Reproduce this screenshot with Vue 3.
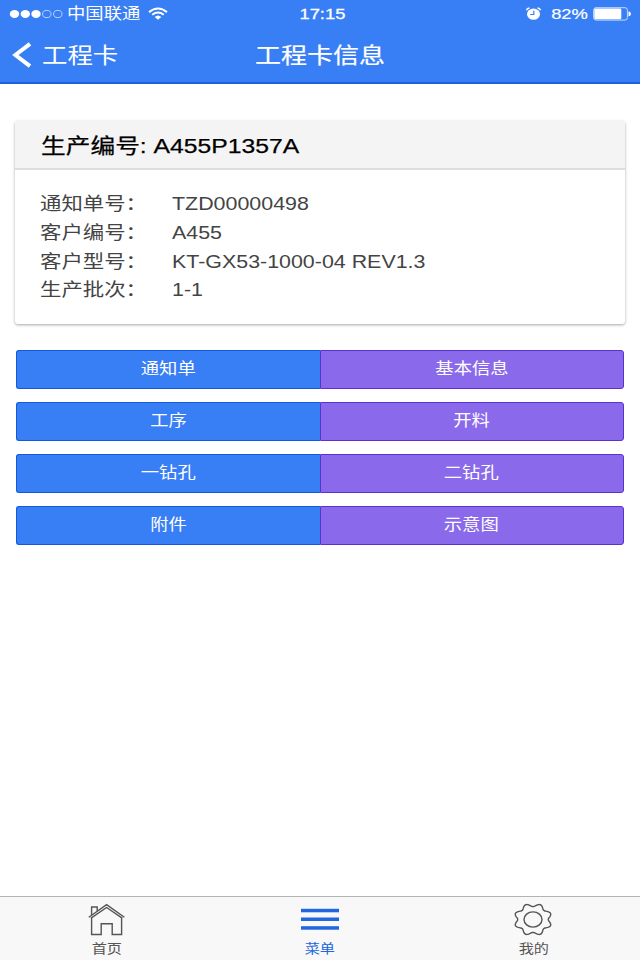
<template>
  <div class="app">
    <header class="top">
      <div class="status">
        <div class="status__side">
          <svg class="signal" width="54" height="12" viewBox="0 0 54 12">
            <ellipse v-for="x in [5.5, 16.3, 27]" :key="x" :cx="x" cy="6" rx="4.7" ry="4" fill="#fff" />
            <ellipse
              v-for="x in [37.8, 48.8]"
              :key="x"
              :cx="x"
              cy="6"
              rx="4.2"
              ry="3.6"
              fill="none"
              stroke="#bcd5fd"
            />
          </svg>
          <span class="wide wide--left carrier">中国联通</span>
          <svg class="wifi" width="20" height="14" viewBox="0 0 20 14" fill="none" stroke="#fff">
            <path d="M1 5.1Q10-2.1 19 5.1" stroke-width="2" />
            <path d="M4.2 7.8Q10 3.3 15.8 7.8" stroke-width="1.9" />
            <path d="M6.7 10.1Q10 7.1 13.3 10.1L10 12.7z" fill="#fff" stroke="none" />
          </svg>
        </div>
        <span class="wide time">17:15</span>
        <div class="status__side status__side--right">
          <svg class="alarm" width="17" height="14" viewBox="0 0 17 14">
            <ellipse cx="8.5" cy="7.2" rx="6.5" ry="5.6" fill="#fff" />
            <path
              d="M1.4 3.3Q2.2 1.3 4.5 1M15.6 3.3Q14.8 1.3 12.5 1"
              fill="none"
              stroke="#fff"
              stroke-width="1.5"
            />
            <path d="M8.8 3.8V7.5H5.2" fill="none" stroke="#387ef5" stroke-width="1.2" />
          </svg>
          <span class="wide percent">82%</span>
          <svg class="battery" width="38" height="14" viewBox="0 0 38 14">
            <rect x=".6" y=".7" width="33.8" height="12.4" rx="2.4" fill="none" stroke="#c4dafd" />
            <rect x="1.3" y="1.5" width="27" height="10.8" rx="1.3" fill="#fff" />
            <path d="M35.5 4.3Q38 5 38 6.9T35.5 9.5z" fill="#fff" />
          </svg>
        </div>
      </div>
      <nav class="nav">
        <button class="back" type="button">
          <svg width="20" height="26" viewBox="0 0 20 26">
            <path d="M18 1.8L3.4 13L18 24.2" fill="none" stroke="#fff" stroke-width="4" />
          </svg>
          <span class="wide wide--left back__text">工程卡</span>
        </button>
        <h1 class="nav__title"><span class="wide">工程卡信息</span></h1>
      </nav>
    </header>

    <main class="content">
      <section class="card">
        <h2 class="card__header">
          <span class="wide wide--left">生产编号: A455P1357A</span>
        </h2>
        <dl class="card__body">
          <div v-for="row in rows" :key="row.label" class="row">
            <dt><span class="wide wide--left">{{ row.label }}：</span></dt>
            <dd><span class="wide wide--left">{{ row.value }}</span></dd>
          </div>
        </dl>
      </section>

      <div class="buttons">
        <div v-for="pair in buttons" :key="pair[0]" class="button-bar">
          <button class="btn btn--positive" type="button"><span class="wide">{{ pair[0] }}</span></button>
          <button class="btn btn--royal" type="button"><span class="wide">{{ pair[1] }}</span></button>
        </div>
      </div>
    </main>

    <footer class="tabs">
      <a class="tab">
        <svg width="38" height="34" viewBox="0 0 38 34" fill="none" stroke="#555" stroke-width="1.4">
          <path d="M.8 14.2L18.6 1.7L36.4 14.2M3 15.2L18.6 4.5L34.2 15.2" />
          <path d="M3.6 14.5V31.5H13.2V20.8H24.2V31.5H33.6V14.5" />
          <path d="M3.6 12V4H9.2V8" />
        </svg>
        <span class="wide">首页</span>
      </a>
      <a class="tab tab--active">
        <svg width="38" height="34" viewBox="0 0 38 34" fill="#2166e0">
          <rect y="5.8" width="38" height="3.5" />
          <rect y="14.5" width="38" height="3.5" />
          <rect y="23.2" width="38" height="3.5" />
        </svg>
        <span class="wide">菜单</span>
      </a>
      <a class="tab">
        <svg width="38" height="34" viewBox="0 0 38 34" fill="none" stroke="#555" stroke-width="1.4">
          <path :d="gearPath" stroke-linejoin="round" />
          <ellipse cx="19" cy="16.5" rx="9" ry="7.6" />
        </svg>
        <span class="wide">我的</span>
      </a>
    </footer>
  </div>
</template>

<script setup>
const rows = [
  { label: '通知单号', value: 'TZD00000498' },
  { label: '客户编号', value: 'A455' },
  { label: '客户型号', value: 'KT-GX53-1000-04 REV1.3' },
  { label: '生产批次', value: '1-1' }
]

const buttons = [
  ['通知单', '基本信息'],
  ['工序', '开料'],
  ['一钻孔', '二钻孔'],
  ['附件', '示意图']
]

// eight rounded teeth, sampled around an ellipse, with a valley at the top
const points = []
for (let i = 0; i < 144; i++) {
  const angle = (i / 144) * Math.PI * 2
  const r = 0.92 - 0.1 * Math.cos(angle * 8)
  points.push(`${(19 + Math.cos(angle) * r * 18.6).toFixed(2)} ${(16.5 + Math.sin(angle) * r * 15.7).toFixed(2)}`)
}
const gearPath = `M${points.join('L')}Z`
</script>

<style>
body {
  margin: 0;
  background: #fff;
}
</style>

<style scoped>
.app {
  display: flex;
  flex-direction: column;
  height: 960px;
  font-family: "Liberation Sans", "Noto Sans CJK SC", sans-serif;
  color: #444;
  overflow: hidden;
}

button {
  border: 0;
  padding: 0;
  background: none;
  color: inherit;
  font: inherit;
}

svg {
  display: block;
  flex: none;
}

/* extended letterforms */
.wide {
  display: inline-block;
  white-space: nowrap;
  transform: scaleX(1.183);
}

.wide--left {
  transform-origin: left center;
}

.top {
  box-sizing: border-box;
  height: 84px;
  flex: none;
  background: #387ef5;
  border-bottom: 2px solid #1b62dc;
  color: #fff;
}

.status {
  display: grid;
  grid-template-columns: 1fr auto 1fr;
  align-items: center;
  height: 28px;
  padding: 0 9px;
  font-size: 15.5px;
  line-height: 28px;
}

.status__side {
  display: flex;
  align-items: center;
}

.status__side--right {
  justify-content: flex-end;
}

.carrier {
  width: 82px;
  margin-left: 4px;
}

.time {
  margin-left: 5px;
  -webkit-text-stroke: 0.3px #fff;
}

.wifi {
  margin-top: -1px;
  margin-left: -1px;
}

.alarm {
  margin-top: -1px;
}

.percent {
  margin: 0 8px 0 12px;
  -webkit-text-stroke: 0.2px #fff;
}

.nav {
  display: grid;
  grid-template-columns: 1fr auto 1fr;
  align-items: center;
  height: 54px;
  padding: 0 12px;
}

.back {
  display: flex;
  align-items: center;
  gap: 10px;
  font-size: 21.5px;
}

.back__text {
  padding-bottom: 4px;
}

.nav__title {
  margin: 0;
  padding-bottom: 4px;
  font-size: 22px;
  font-weight: 400;
  -webkit-text-stroke: 0.2px #fff;
}

.content {
  flex: 1;
  padding: 37px 15px 0;
}

.card {
  height: 203px;
  border-radius: 3px;
  background: #fff;
  box-shadow: 0 1px 3px rgba(0, 0, 0, 0.35);
  overflow: hidden;
}

.card__header {
  box-sizing: border-box;
  height: 49px;
  margin: 0;
  padding-left: 25.5px;
  border-bottom: 2px solid #ddd;
  background: #f4f4f4;
  color: #000;
  font-size: 20.9px;
  font-weight: 400;
  line-height: 49px;
  -webkit-text-stroke: 0.25px #000;
}

.card__body {
  margin: 0;
  padding: 20px 25px 0;
  font-size: 18.1px;
  line-height: 28.8px;
}

.row {
  display: grid;
  grid-template-columns: 132px 1fr;
  height: 28.8px;
}

.row dd {
  margin: 0;
}

.buttons {
  display: flex;
  flex-direction: column;
  gap: 13.2px;
  margin: 25.5px 1px 0;
}

.button-bar {
  display: flex;
  height: 39px;
}

.btn {
  box-sizing: border-box;
  flex: 1;
  border: 1px solid;
  padding-bottom: 2px;
  color: #fff;
  font-size: 15.5px;
  line-height: 35px;
}

.btn--positive {
  border-color: #1458dc;
  border-right: 0;
  border-radius: 3px 0 0 3px;
  background: #387ef5;
}

.btn--royal {
  border-color: #5a32cf;
  border-radius: 0 3px 3px 0;
  background: #8a6aeb;
}

.tabs {
  box-sizing: border-box;
  display: flex;
  height: 64px;
  flex: none;
  border-top: 1px solid #b2b2b2;
  background: #f8f8f8;
}

.tab {
  display: flex;
  flex: 1;
  flex-direction: column;
  align-items: center;
  padding-top: 6px;
  color: #555;
  font-size: 12.8px;
  line-height: 24px;
}

.tab--active {
  color: #2166e0;
}
</style>
